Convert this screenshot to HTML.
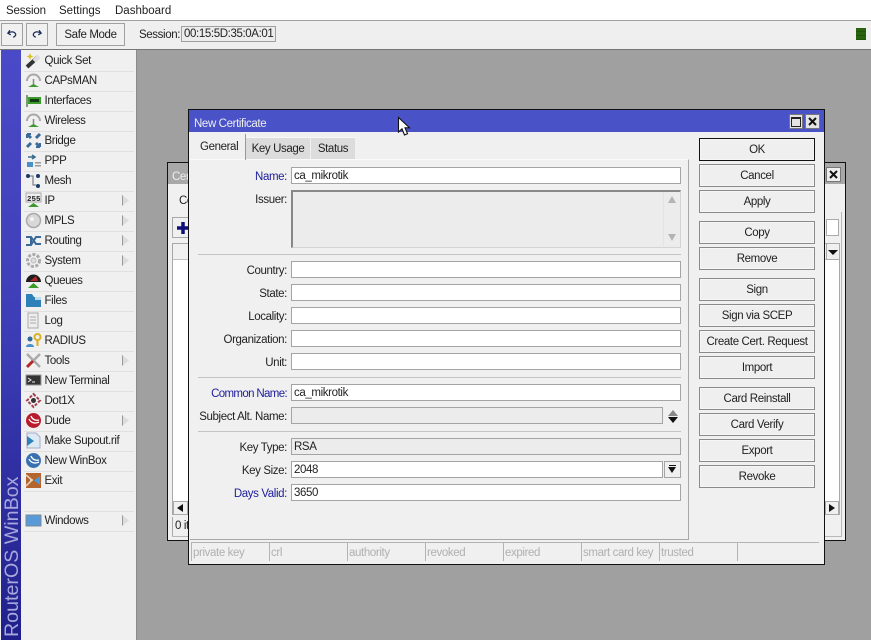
<!DOCTYPE html>
<html><head><meta charset="utf-8"><style>
html,body{margin:0;padding:0}
body{width:871px;height:640px;overflow:hidden;position:relative;background:#a0a0a0;font:11.5px "Liberation Sans",sans-serif;letter-spacing:-.38px;color:#222}
div,span,svg{position:absolute;box-sizing:border-box}
.t{white-space:nowrap;line-height:14px;transform:translateY(1px)}
.m{left:44.500px;white-space:nowrap;line-height:14px;height:14px;transform:translateY(1px)}
.d{left:24px;width:110px;height:1px;background:#e0e0e0}
.a{left:122px;width:7px;height:11px;background:#dcdcdc;border-left:1px solid #999;clip-path:polygon(0 0,100% 50%,0 100%)}
.l{width:96px;text-align:right;left:191px;white-space:nowrap;line-height:14px;transform:translateY(1px)}
.b{color:#20209c}
.f{left:291px;width:390px;height:17px;background:#fff;border:1px solid #a4a4a4;line-height:16px;padding-left:2px;white-space:nowrap}
.g{background:#ececec}
.s{left:198px;width:483px;height:1px;background:#c4c4c4}
.btn{left:699px;width:116px;height:23px;border:1px solid #8a8a8a;background:#efefef;text-align:center;line-height:23px;box-shadow:inset 0 0 0 1px #f6f6f6}
.st{top:542px;width:78px;height:19px;border-top:1px solid #b4b4b4;border-left:1px solid #b4b4b4;color:#b0b0b0;line-height:20px;padding-left:1px;white-space:nowrap}
.i{left:25px;width:17px;height:17px}
</style></head><body>
<div style="left:0;top:0;width:871px;height:21px;background:#fff;border-bottom:1px solid #a0a0a0"></div>
<span class="t" style="left:6px;top:3px;letter-spacing:-.15px">Session</span>
<span class="t" style="left:59px;top:3px;letter-spacing:0">Settings</span>
<span class="t" style="left:115px;top:3px;letter-spacing:0">Dashboard</span>
<div style="left:0;top:21px;width:871px;height:29px;background:#efefef;border-bottom:1px solid #777"></div>
<div style="left:1px;top:23px;width:22px;height:23px;border:1px solid #a0a0a0;background:#f0f0f0"></div>
<svg style="left:6px;top:29px" width="12" height="10" viewBox="0 0 13 12"><path d="M4 1.500 1.500 5 5 7M2 5C5 2.500 10 3 11 6.500 11 8 10 9 8 10" fill="none" stroke="#1a2a5a" stroke-width="1.500"/></svg>
<div style="left:26px;top:23px;width:22px;height:23px;border:1px solid #a0a0a0;background:#f0f0f0"></div>
<svg style="left:31px;top:29px" width="12" height="10" viewBox="0 0 13 12"><path d="M9 1.500 11.500 5 8 7M11 5C8 2.500 3 3 2 6.500 2 8 3 9 5 10" fill="none" stroke="#1a2a5a" stroke-width="1.500"/></svg>
<div style="left:56px;top:23px;width:69px;height:23px;border:1px solid #a0a0a0;background:#f0f0f0;text-align:center;line-height:23px">Safe Mode</div>
<span class="t" style="left:139px;top:27px">Session:</span>
<div style="left:181px;top:26px;width:95px;height:16px;border:1px solid #a0a0a0;background:#ececec;line-height:15px;padding-left:2px;white-space:nowrap">00:15:5D:35:0A:01</div>
<div style="left:856px;top:28px;width:10px;height:12px;background:repeating-linear-gradient(#2a6210 0 3px,#1e5608 3px 4px)"></div>

<div style="left:0;top:50px;width:137px;height:590px;background:#f0f0f0;border-right:1px solid #8a8a8a"></div>
<div style="left:1px;top:50px;width:20px;height:590px;background:linear-gradient(#4a4ac8 0,#3e3eb8 45%,#20208c 100%)"></div>
<svg style="left:1px;top:470px;letter-spacing:0" width="20" height="170"><text transform="translate(17,167) rotate(-90)" font-family="Liberation Sans" font-size="19.650" fill="#a8a8dc">RouterOS WinBox</text></svg>

<div class="d" style="top:71px"></div><div class="d" style="top:91px"></div><div class="d" style="top:111px"></div><div class="d" style="top:131px"></div><div class="d" style="top:151px"></div><div class="d" style="top:171px"></div><div class="d" style="top:191px"></div><div class="d" style="top:211px"></div><div class="d" style="top:231px"></div><div class="d" style="top:251px"></div><div class="d" style="top:271px"></div><div class="d" style="top:291px"></div><div class="d" style="top:311px"></div><div class="d" style="top:331px"></div><div class="d" style="top:351px"></div><div class="d" style="top:371px"></div><div class="d" style="top:391px"></div><div class="d" style="top:411px"></div><div class="d" style="top:431px"></div><div class="d" style="top:451px"></div><div class="d" style="top:471px"></div><div class="d" style="top:491px"></div><div class="d" style="top:511px"></div><div class="d" style="top:531px"></div>

<span class="m" style="top:53px">Quick Set</span>
<span class="m" style="top:73px">CAPsMAN</span>
<span class="m" style="top:93px">Interfaces</span>
<span class="m" style="top:113px">Wireless</span>
<span class="m" style="top:133px">Bridge</span>
<span class="m" style="top:153px">PPP</span>
<span class="m" style="top:173px">Mesh</span>
<span class="m" style="top:193px">IP</span><div class="a" style="top:195px"></div>
<span class="m" style="top:213px">MPLS</span><div class="a" style="top:215px"></div>
<span class="m" style="top:233px">Routing</span><div class="a" style="top:235px"></div>
<span class="m" style="top:253px">System</span><div class="a" style="top:255px"></div>
<span class="m" style="top:273px">Queues</span>
<span class="m" style="top:293px">Files</span>
<span class="m" style="top:313px">Log</span>
<span class="m" style="top:333px">RADIUS</span>
<span class="m" style="top:353px">Tools</span><div class="a" style="top:355px"></div>
<span class="m" style="top:373px">New Terminal</span>
<span class="m" style="top:393px">Dot1X</span>
<span class="m" style="top:413px">Dude</span><div class="a" style="top:415px"></div>
<span class="m" style="top:433px">Make Supout.rif</span>
<span class="m" style="top:453px">New WinBox</span>
<span class="m" style="top:473px">Exit</span>
<span class="m" style="top:513px">Windows</span><div class="a" style="top:515px"></div>

<svg class="i" style="top:52px" viewBox="0 0 17 17"><path d="M2 15 13 5" stroke="#333" stroke-width="4"/><path d="M9 9 14 4" stroke="#ddd" stroke-width="4"/><path d="M5 1l1 2.500 2.500 1-2.500 1-1 2.500-1-2.500-2.500-1 2.500-1z" fill="#d8c020"/></svg>
<svg class="i" style="top:72px" viewBox="0 0 17 17"><path d="M2 9a6.500 6.500 0 0 1 13 0" fill="none" stroke="#a8a8a8" stroke-width="2"/><path d="M8.500 7v7" stroke="#888" stroke-width="1.500"/><path d="M3 15h11l-5.500-3z" fill="#3a9a2a"/></svg>
<svg class="i" style="top:92px" viewBox="0 0 17 17"><rect x="1" y="3" width="2" height="12" fill="#7a9a7a"/><rect x="3" y="5" width="13" height="7" fill="#3a9a2a"/><rect x="5" y="7" width="9" height="3" fill="#123a12"/></svg>
<svg class="i" style="top:112px" viewBox="0 0 17 17"><path d="M2 9a6.500 6.500 0 0 1 13 0" fill="none" stroke="#a8a8a8" stroke-width="2"/><path d="M8.500 7v7" stroke="#888" stroke-width="1.500"/><path d="M3 15h11l-5.500-3z" fill="#3a9a2a"/></svg>
<svg class="i" style="top:132px" viewBox="0 0 17 17"><path d="M2 2l4 4M15 2l-4 4M2 15l4-4M15 15l-4-4" stroke="#3a6a9a" stroke-width="3"/><path d="M2 2h4M2 2v4M15 15h-4M15 15v-4" stroke="#3a6a9a" stroke-width="2"/></svg>
<svg class="i" style="top:152px" viewBox="0 0 17 17"><rect x="2" y="10" width="6" height="5" fill="#4a90c8"/><rect x="10" y="10" width="6" height="1.500" fill="#999"/><rect x="10" y="13" width="6" height="1.500" fill="#999"/><path d="M3 5h6M7 3l3 2-3 2" fill="none" stroke="#3a6a8a" stroke-width="1.500"/></svg>
<svg class="i" style="top:172px" viewBox="0 0 17 17"><circle cx="3" cy="4" r="2" fill="#1a3a6a"/><circle cx="13" cy="4" r="2" fill="#1a3a6a"/><circle cx="13" cy="14" r="2" fill="#1a3a6a"/><path d="M5 4h3v9h3" fill="none" stroke="#667" stroke-width="1"/></svg>
<svg class="i" style="top:192px;letter-spacing:0" viewBox="0 0 17 17"><rect x="1" y="1" width="15" height="9" fill="#eee" stroke="#999" stroke-width=".8"/><text x="2" y="9" font-size="7.500" font-weight="bold" font-family="Liberation Mono" fill="#222">255</text><path d="M3 15h11l-5.500-4z" fill="#3a9a2a"/></svg>
<svg class="i" style="top:212px" viewBox="0 0 17 17"><circle cx="8.500" cy="8.500" r="7" fill="#d8d8d8" stroke="#aaa" stroke-width="1.500"/><circle cx="7" cy="7" r="2" fill="#f4f4f4"/></svg>
<svg class="i" style="top:232px" viewBox="0 0 17 17"><path d="M1 5h5l5 7h5M1 13h5l5-8h5M6 5v8" fill="none" stroke="#3a6a9a" stroke-width="2"/></svg>
<svg class="i" style="top:252px" viewBox="0 0 17 17"><circle cx="8.500" cy="8.500" r="6" fill="none" stroke="#aaa" stroke-width="3" stroke-dasharray="3 1.500"/><circle cx="8.500" cy="8.500" r="2.500" fill="#ddd" stroke="#bbb"/></svg>
<svg class="i" style="top:272px" viewBox="0 0 17 17"><path d="M1 10a7.500 7.500 0 0 1 15 0z" fill="#1e1e1e"/><path d="M5 9 11 4 13 9z" fill="#b02828"/><path d="M3 16h11l-5.500-5z" fill="#3a9a2a"/></svg>
<svg class="i" style="top:292px" viewBox="0 0 17 17"><path d="M1 2h6l2 3h7v10H1z" fill="#2e80b8"/><path d="M10 5h6v3h-6z" fill="#bde"/></svg>
<svg class="i" style="top:312px" viewBox="0 0 17 17"><rect x="3" y="1" width="10" height="15" fill="#eee" stroke="#aaa"/><path d="M5 5h6M5 8h6M5 11h6" stroke="#aaa"/></svg>
<svg class="i" style="top:332px" viewBox="0 0 17 17"><circle cx="5" cy="7" r="2.500" fill="#2e6a9a"/><path d="M1 15c0-4 8-4 8 0z" fill="#4a90c8"/><circle cx="12.500" cy="5" r="3" fill="none" stroke="#d8b020" stroke-width="2"/><path d="M12.500 8v6" stroke="#d8b020" stroke-width="2"/></svg>
<svg class="i" style="top:352px" viewBox="0 0 17 17"><path d="M2 2 15 15" stroke="#aaa" stroke-width="2.500"/><path d="M15 2 9 8" stroke="#aaa" stroke-width="2.500"/><path d="M8 9 2 15" stroke="#b02828" stroke-width="3"/></svg>
<svg class="i" style="top:372px" viewBox="0 0 17 17"><rect x="1" y="3" width="15" height="10" fill="#333" stroke="#999"/><path d="M3 6l3 2-3 2" fill="none" stroke="#eee"/><path d="M7 10h3" stroke="#eee"/></svg>
<svg class="i" style="top:392px" viewBox="0 0 17 17"><path d="M8.500 2 15 8.500 8.500 15 2 8.500z" fill="none" stroke="#a04050" stroke-width="2" stroke-dasharray="3 1.500"/><circle cx="8.500" cy="8.500" r="2.500" fill="#333"/></svg>
<svg class="i" style="top:412px" viewBox="0 0 17 17"><circle cx="8.500" cy="8.500" r="7.500" fill="#b81c2c"/><path d="M4 7c2 4 6 5 10 3M6 4c1 3 4 5 8 4" fill="none" stroke="#fff" stroke-width="1.300"/></svg>
<svg class="i" style="top:432px" viewBox="0 0 17 17"><path d="M2 1h9l4 4v11H2z" fill="#dceaf4" stroke="#aac"/><path d="M2 4l7 5-7 5z" fill="#2e80b8"/></svg>
<svg class="i" style="top:452px" viewBox="0 0 17 17"><circle cx="8.500" cy="8.500" r="7.500" fill="#3a70b0"/><path d="M4 7c2 4 6 5 10 3M6 4c1 3 4 5 8 4" fill="none" stroke="#fff" stroke-width="1.300"/></svg>
<svg class="i" style="top:472px" viewBox="0 0 17 17"><rect x="1" y="1" width="15" height="15" fill="#b4642c"/><path d="M1 3l6 5-6 6M5 8h3" fill="none" stroke="#e8d8c0" stroke-width="1.500"/><path d="M15 4 9 8.500 15 13z" fill="#4a9ad8"/></svg>
<svg class="i" style="top:512px" viewBox="0 0 17 17"><rect x="1" y="3" width="15" height="11" fill="#5a9ad8" stroke="#7a8a9a"/></svg>

<!-- back window -->
<div style="left:167px;top:162px;width:679px;height:379px;background:#f0f0f0;border:1px solid #111"></div>
<div style="left:168px;top:163px;width:677px;height:21px;background:#a8a8a8"></div>
<span class="t" style="left:172px;top:169px;color:#eee">Cer</span>
<span class="t" style="left:179px;top:193px">Ce</span>
<div style="left:826px;top:167px;width:15px;height:15px;border:1px solid #777;background:#eee;text-align:center"></div>
<svg style="left:829px;top:170px" width="9" height="9"><path d="M1 1 8 8M8 1 1 8" stroke="#111" stroke-width="2"/></svg>
<div style="left:172px;top:217px;width:20px;height:21px;border:1px solid #a8a8a8;background:#f0f0f0"></div>
<svg style="left:177px;top:222px" width="12" height="12"><path d="M6 0v12M0 6h12" stroke="#10107c" stroke-width="3.500"/></svg>
<div style="left:172px;top:243px;width:668px;height:272px;background:#fff;border:1px solid #a8a8a8"></div>
<div style="left:173px;top:244px;width:666px;height:16px;background:#f0f0f0;border-bottom:1px solid #c0c0c0"></div>
<div style="left:826px;top:219px;width:13px;height:17px;background:#fff;border:1px solid #aaa"></div>
<div style="left:826px;top:243px;width:14px;height:17px;background:#f0f0f0;border:1px solid #aaa"></div>
<div style="left:828px;top:250px;width:0;height:0;border-top:5px solid #111;border-left:5px solid transparent;border-right:5px solid transparent"></div>
<div style="left:173px;top:501px;width:15px;height:14px;background:#f0f0f0;border:1px solid #aaa"></div>
<div style="left:177px;top:504px;width:0;height:0;border-right:6px solid #111;border-top:4px solid transparent;border-bottom:4px solid transparent"></div>
<div style="left:825px;top:501px;width:14px;height:14px;background:#f0f0f0;border:1px solid #aaa"></div>
<div style="left:829px;top:504px;width:0;height:0;border-left:6px solid #111;border-top:4px solid transparent;border-bottom:4px solid transparent"></div>
<span class="t" style="left:175px;top:518px">0 it</span>
<div style="left:172px;top:517px;width:1px;height:20px;background:#aaa"></div>
<div style="left:172px;top:536px;width:670px;height:1px;background:#b8b8b8"></div>
<div style="left:841px;top:212px;width:1px;height:325px;background:#b8b8b8"></div>

<!-- front window -->
<div style="left:188px;top:109px;width:637px;height:456px;background:#f0f0f0;border:1px solid #111"></div>
<div style="left:189px;top:110px;width:635px;height:22px;background:#4a52c8"></div>
<span class="t" style="left:194px;top:116px;color:#eee">New Certificate</span>
<div style="left:789px;top:114px;width:14px;height:15px;border:1px solid #777;background:#e4e4e4"></div>
<div style="left:791px;top:117px;width:10px;height:10px;border:1px solid #222;border-top-width:2px"></div>
<div style="left:805px;top:114px;width:15px;height:15px;border:1px solid #777;background:#e4e4e4"></div>
<svg style="left:808px;top:117px" width="9" height="9"><path d="M1 1 8 8M8 1 1 8" stroke="#111" stroke-width="2"/></svg>

<div style="left:190px;top:159px;width:499px;height:381px;border-top:1px solid #fafafa;border-right:1px solid #a8a8a8;border-bottom:1px solid #a8a8a8"></div>
<div style="left:245px;top:134px;width:1px;height:26px;background:#999"></div>
<span class="t" style="left:200px;top:139px">General</span>
<div style="left:246px;top:137px;width:64px;height:22px;background:#dcdcdc;border-top:1px solid #f8f8f8;text-align:center;line-height:23px">Key Usage</div>
<div style="left:311px;top:137px;width:44px;height:22px;background:#dcdcdc;border-top:1px solid #f8f8f8;text-align:center;line-height:23px">Status</div>

<span class="l b" style="top:169px">Name:</span><div class="f" style="top:167px">ca_mikrotik</div>
<span class="l" style="top:192px">Issuer:</span>
<div class="f g" style="top:190px;height:58px;border:1px solid #d4d4d4;border-top:2px solid #888;border-left:2px solid #888"></div>
<div style="left:663px;top:192px;width:1px;height:54px;background:#e4e4e4"></div>
<div style="left:668px;top:196px;width:0;height:0;border-bottom:7px solid #b4b4b4;border-left:4.500px solid transparent;border-right:4.500px solid transparent"></div>
<div style="left:668px;top:234px;width:0;height:0;border-top:7px solid #b4b4b4;border-left:4.500px solid transparent;border-right:4.500px solid transparent"></div>
<div class="s" style="top:254px"></div>
<span class="l" style="top:263px">Country:</span><div class="f" style="top:261px"></div>
<span class="l" style="top:286px">State:</span><div class="f" style="top:284px"></div>
<span class="l" style="top:309px">Locality:</span><div class="f" style="top:307px"></div>
<span class="l" style="top:332px">Organization:</span><div class="f" style="top:330px"></div>
<span class="l" style="top:355px">Unit:</span><div class="f" style="top:353px"></div>
<div class="s" style="top:377px"></div>
<span class="l b" style="top:386px;letter-spacing:-.65px">Common Name:</span><div class="f" style="top:384px">ca_mikrotik</div>
<span class="l" style="top:409px">Subject Alt. Name:</span><div class="f g" style="top:407px;width:372px"></div>
<div style="left:668px;top:410px;width:0;height:0;border-bottom:6px solid #888;border-left:5px solid transparent;border-right:5px solid transparent"></div>
<div style="left:668px;top:417px;width:0;height:0;border-top:6px solid #111;border-left:5px solid transparent;border-right:5px solid transparent"></div>
<div class="s" style="top:431px"></div>
<span class="l" style="top:440px">Key Type:</span><div class="f g" style="top:438px">RSA</div>
<span class="l" style="top:463px">Key Size:</span><div class="f" style="top:461px;width:372px">2048</div>
<div style="left:664px;top:461px;width:17px;height:17px;border:1px solid #a4a4a4;background:#f0f0f0"></div>
<div style="left:669px;top:465px;width:7px;height:1px;background:#111"></div>
<div style="left:668px;top:467px;width:0;height:0;border-top:6px solid #111;border-left:4.500px solid transparent;border-right:4.500px solid transparent"></div>
<span class="l b" style="top:486px">Days Valid:</span><div class="f" style="top:484px">3650</div>

<div class="btn" style="top:138px;border-color:#111">OK</div>
<div class="btn" style="top:164px">Cancel</div>
<div class="btn" style="top:190px">Apply</div>
<div class="btn" style="top:221px">Copy</div>
<div class="btn" style="top:247px">Remove</div>
<div class="btn" style="top:278px">Sign</div>
<div class="btn" style="top:304px">Sign via SCEP</div>
<div class="btn" style="top:330px">Create Cert. Request</div>
<div class="btn" style="top:356px">Import</div>
<div class="btn" style="top:387px">Card Reinstall</div>
<div class="btn" style="top:413px">Card Verify</div>
<div class="btn" style="top:439px">Export</div>
<div class="btn" style="top:465px">Revoke</div>

<div class="st" style="left:191px">private key</div>
<div class="st" style="left:269px">crl</div>
<div class="st" style="left:347px">authority</div>
<div class="st" style="left:425px">revoked</div>
<div class="st" style="left:503px">expired</div>
<div class="st" style="left:581px">smart card key</div>
<div class="st" style="left:659px">trusted</div>
<div class="st" style="left:737px;width:82px"></div>

<svg style="left:397px;top:116px" width="14" height="21" viewBox="0 0 14 21"><path d="M1.500 1.500V16L5 12.800 7.500 19 10.500 17.700 8 11.800H12.500z" fill="#fff" stroke="#111" stroke-width="1.100"/></svg>
</body></html>
